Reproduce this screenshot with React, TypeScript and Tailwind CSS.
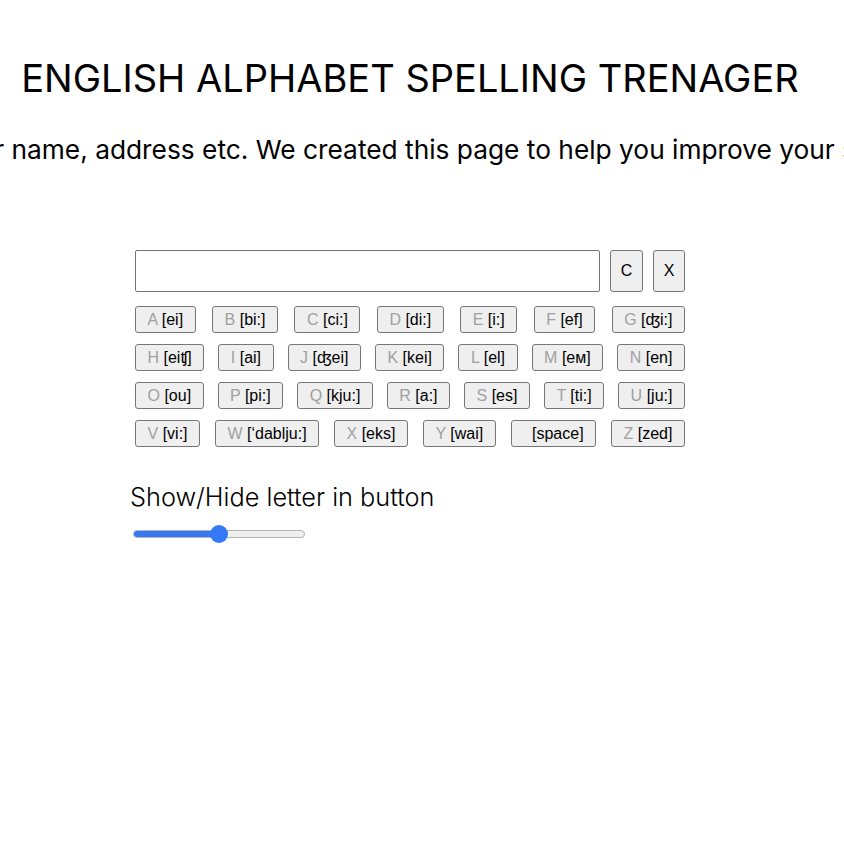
import React from "react";

const rows: [string, string][][] = [
  [["A", "[ei]"], ["B", "[bi:]"], ["C", "[ci:]"], ["D", "[di:]"], ["E", "[i:]"], ["F", "[ef]"], ["G", "[ʤi:]"]],
  [["H", "[eiʧ]"], ["I", "[ai]"], ["J", "[ʤei]"], ["K", "[kei]"], ["L", "[el]"], ["M", "[ем]"], ["N", "[en]"]],
  [["O", "[ou]"], ["P", "[pi:]"], ["Q", "[kju:]"], ["R", "[a:]"], ["S", "[es]"], ["T", "[ti:]"], ["U", "[ju:]"]],
  [["V", "[vi:]"], ["W", "[‘dablju:]"], ["X", "[eks]"], ["Y", "[wai]"], [" ", "[space]"], ["Z", "[zed]"]],
];

const btnFont = { fontFamily: '"Liberation Sans", Arial, sans-serif' };

function Key({ l, p }: { l: string; p: string }) {
  return (
    <button className="h-[27px] px-[11.5px] bg-[#efefef] border border-[#767676] rounded-[3px] text-[16px] leading-none text-black whitespace-pre" style={btnFont}>
      <span className="text-[#a0a0a0]">{l}</span> {p}
    </button>
  );
}

export default function App() {
  return (
    <div className="w-[844px] h-[850px] bg-white overflow-hidden" style={{ fontFamily: "Inter, Roboto, sans-serif" }}>
      <div className="w-[820px] flex justify-center">
        <h1 className="mt-[54px] text-[38px] leading-[48px] font-normal text-black whitespace-nowrap">ENGLISH ALPHABET SPELLING TRENAGER</h1>
      </div>
      <div className="mt-[31px] w-[844px] flex justify-center">
        <p className="pr-[18px] text-[26.3px] leading-[34px] font-normal text-black whitespace-nowrap shrink-0">
          Spell your name, address etc. We created this page to help you improve your spelling.
        </p>
      </div>
      <div className="w-[820px] flex justify-center">
        <div className="mt-[83px] w-[560px] flex flex-col">
          <div className="px-[5px] flex flex-col">
            <div className="flex items-center gap-[10px]">
              <div className="flex-1 h-[42px] border border-[#767676] rounded-[2px] bg-white" />
              <button className="h-[42px] w-[33px] bg-[#efefef] border border-[#767676] rounded-[3px] text-[16px] text-black" style={btnFont}>C</button>
              <button className="h-[42px] w-[32px] bg-[#efefef] border border-[#767676] rounded-[3px] text-[16px] text-black" style={btnFont}>X</button>
            </div>
            <div className="mt-[14px] flex flex-col gap-[11px]">
              {rows.map((r, i) => (
                <div key={i} className="flex justify-between">
                  {r.map(([l, p]) => (
                    <Key key={p} l={l} p={p} />
                  ))}
                </div>
              ))}
            </div>
          </div>
          <div className="mt-[34px] text-[25.3px] leading-[31px] font-light text-black">Show/Hide letter in button</div>
          <div className="mt-[13px] ml-[3px] relative w-[172px] h-[18px] flex items-center">
            <div className="w-full h-[8px] rounded-full bg-[#efefef] border border-[#b5b5b5] overflow-hidden">
              <div className="h-full w-[86px] bg-[#3478f6]" />
            </div>
            <div className="absolute left-[77px] top-0 w-[18px] h-[18px] rounded-full bg-[#3478f6]" />
          </div>
        </div>
      </div>
    </div>
  );
}
